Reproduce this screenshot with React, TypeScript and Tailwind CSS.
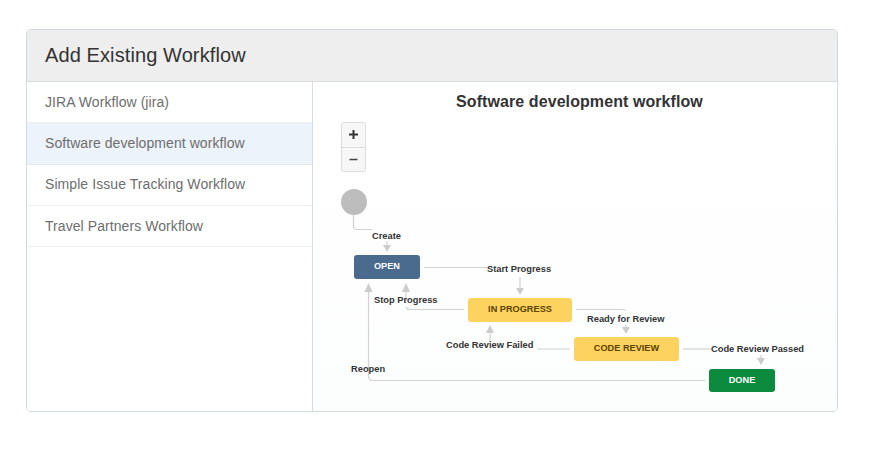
const workflows = [
  { name: "JIRA Workflow (jira)", active: false },
  { name: "Software development workflow", active: true },
  { name: "Simple Issue Tracking Workflow", active: false },
  { name: "Travel Partners Workflow", active: false },
];

const statuses = [
  { name: "OPEN", className: "left-[41px] top-[83px] w-[66px] h-[24px] bg-[#4a6a8e] text-white" },
  { name: "IN PROGRESS", className: "left-[155px] top-[126px] w-[104px] h-[24px] bg-[#fdd25e] text-[#594300]" },
  { name: "CODE REVIEW", className: "left-[261px] top-[165px] w-[105px] h-[24px] bg-[#fdd25e] text-[#594300]" },
  { name: "DONE", className: "left-[396px] top-[197px] w-[66px] h-[23px] bg-[#0c8a3e] text-white" },
];

const transitions = [
  { name: "Create", className: "left-[59px] top-[58px]" },
  { name: "Start Progress", className: "left-[174px] top-[91px]" },
  { name: "Stop Progress", className: "left-[61px] top-[122px]" },
  { name: "Ready for Review", className: "left-[274px] top-[141px]" },
  { name: "Code Review Failed", className: "left-[133px] top-[167px]" },
  { name: "Code Review Passed", className: "left-[398px] top-[171px]" },
  { name: "Reopen", className: "left-[38px] top-[191px]" },
];

// connector paths use page coordinates, the viewBox shifts them into the canvas
const lines = [
  "M353.5 215V226Q353.5 229.5 357 229.5H372",
  "M387 241V246",
  "M424 267.5H487",
  "M520 277V289",
  "M464 309.5H411Q407 309.5 406 307",
  "M406 303V289",
  "M576 309.5H622Q625 309.5 626 311",
  "M626 325V329",
  "M537 349H570",
  "M490 341V330",
  "M683 349H711",
  "M761 355V360",
  "M705 380.5H373Q368.5 380.5 368.5 376V289",
];

const arrows = [
  "M383 245H391L387 252Z",
  "M516 288H524L520 295Z",
  "M402 292H410L406 283Z",
  "M364.5 292H372.5L368.5 283Z",
  "M622 327H630L626 334Z",
  "M486 333H494L490 325Z",
  "M757 358H765L761 365Z",
];

function Diagram() {
  return (
    <div className="relative flex-1">
      <svg className="absolute inset-0 w-[525px] h-[239px]" viewBox="313 172 525 239" fill="none">
        {lines.map((d) => (
          <path key={d} d={d} stroke="#d2d2d2" strokeWidth="1.2" />
        ))}
        {arrows.map((d) => (
          <path key={d} d={d} fill="#cccccc" />
        ))}
      </svg>
      <div className="absolute left-[28px] top-[17px] w-[26px] h-[26px] rounded-full bg-[#bdbdbd]" />
      {statuses.map((s) => (
        <div
          key={s.name}
          className={`absolute flex items-center justify-center rounded-[3px] text-[9.2px] font-bold ${s.className}`}
        >
          {s.name}
        </div>
      ))}
      {transitions.map((t) => (
        <div key={t.name} className={`absolute whitespace-nowrap text-[9.3px] leading-[12px] font-bold text-[#333333] ${t.className}`}>
          {t.name}
        </div>
      ))}
    </div>
  );
}

export default function App() {
  return (
    <div className="min-h-[450px] bg-white pt-[29px] pl-[26px] font-['Liberation_Sans',Arial,sans-serif]">
      <div className="w-[812px] h-[383px] flex flex-col rounded-[5px] border border-[#cfdade] overflow-hidden">
        <div className="h-[52px] shrink-0 flex items-center px-[18px] pb-[1px] bg-[#eeeeee] border-b border-[#d8dcdf]">
          <h1 className="text-[20px] tracking-[0.1px] text-[#333333]">Add Existing Workflow</h1>
        </div>

        <div className="flex flex-1 min-h-0">
          <ul className="w-[286px] shrink-0 border-r border-[#d5dde2] bg-white">
            {workflows.map((w) => (
              <li
                key={w.name}
                className={`h-[41.3px] flex items-center px-[18px] text-[14px] tracking-[0.07px] text-[#6e6e6e] border-b ${
                  w.active ? "bg-[#ecf3fa] border-[#e3e9ee]" : "border-[#eeeeee]"
                }`}
              >
                {w.name}
              </li>
            ))}
          </ul>

          <div className="flex-1 flex flex-col bg-gradient-to-b from-white to-[#fcfdfd]">
            <h2 className="h-[40px] pl-[9px] flex items-center justify-center text-[16px] tracking-[0.08px] font-bold text-[#333333]">
              Software development workflow
            </h2>
            <div className="ml-[28px] w-[25px] h-[50px] flex flex-col rounded-[3px] border border-[#dddddd] bg-[#f7f7f7] text-[#333333]">
              <div className="flex-1 flex items-center justify-center border-b border-[#dddddd]">
                <svg width="11" height="11" viewBox="0 0 11 11"><path d="M5.5 1V10M1 5.5H10" stroke="#333333" strokeWidth="2" /></svg>
              </div>
              <div className="flex-1 flex items-center justify-center">
                <svg width="11" height="11" viewBox="0 0 11 11"><path d="M1.5 5.5H9.5" stroke="#444444" strokeWidth="1.6" /></svg>
              </div>
            </div>
            <Diagram />
          </div>
        </div>
      </div>
    </div>
  );
}
